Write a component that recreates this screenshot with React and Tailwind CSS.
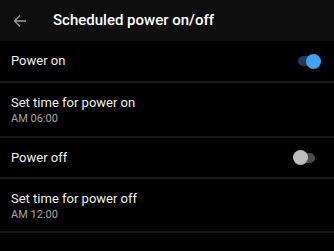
import React from "react";

function Toggle({ on }) {
  return (
    <div className={`relative h-[15px] flex items-center ${on ? "w-[22px]" : "w-[20px]"}`}>
      <div className={`w-full h-[10px] rounded-full ${on ? "bg-[#1d3d5a]" : "bg-[#4a4a4a]"}`} />
      <div
        className={`absolute top-0 w-[15px] h-[15px] rounded-full ${on ? "right-[-1px] bg-[#42a1f0]" : "left-[-2px] bg-[#bdbdbd]"}`}
      />
    </div>
  );
}

function Divider() {
  return <div className="h-[2px] bg-[#181818]" />;
}

export default function App() {
  return (
    <div className="w-[334px] h-[251px] bg-black overflow-hidden" style={{ fontFamily: "Roboto, 'Noto Sans', sans-serif" }}>
      <div className="h-[41px] bg-[#0e0e0e] flex items-center">
        <svg width="14" height="14" viewBox="0 0 14 14" className="ml-[13px]" fill="none" stroke="#9a9a9a" strokeWidth="1.3">
          <path d="M13 7H1.5M7 1.5L1.5 7L7 12.5" />
        </svg>
        <div className="ml-[26px] text-white text-[15px] font-medium">Scheduled power on/off</div>
      </div>
      <div className="h-[40px] flex items-center justify-between pl-[11px] pr-[14px]">
        <span className="text-[#f2f2f2] text-[13px]">Power on</span>
        <Toggle on />
      </div>
      <Divider />
      <div className="h-[53px] flex flex-col justify-center pl-[11px] pt-[2px]">
        <span className="text-[#f2f2f2] text-[13px] leading-[16px]">Set time for power on</span>
        <span className="text-[#a8a8a8] text-[11px] leading-[14px] mt-[1px]">AM 06:00</span>
      </div>
      <Divider />
      <div className="h-[39px] flex items-center justify-between pl-[11px] pr-[19px]">
        <span className="text-[#f2f2f2] text-[13px]">Power off</span>
        <Toggle on={false} />
      </div>
      <Divider />
      <div className="h-[52px] flex flex-col justify-center pl-[11px] pt-[2px]">
        <span className="text-[#f2f2f2] text-[13px] leading-[16px]">Set time for power off</span>
        <span className="text-[#a8a8a8] text-[11px] leading-[14px] mt-[1px]">AM 12:00</span>
      </div>
      <Divider />
    </div>
  );
}
